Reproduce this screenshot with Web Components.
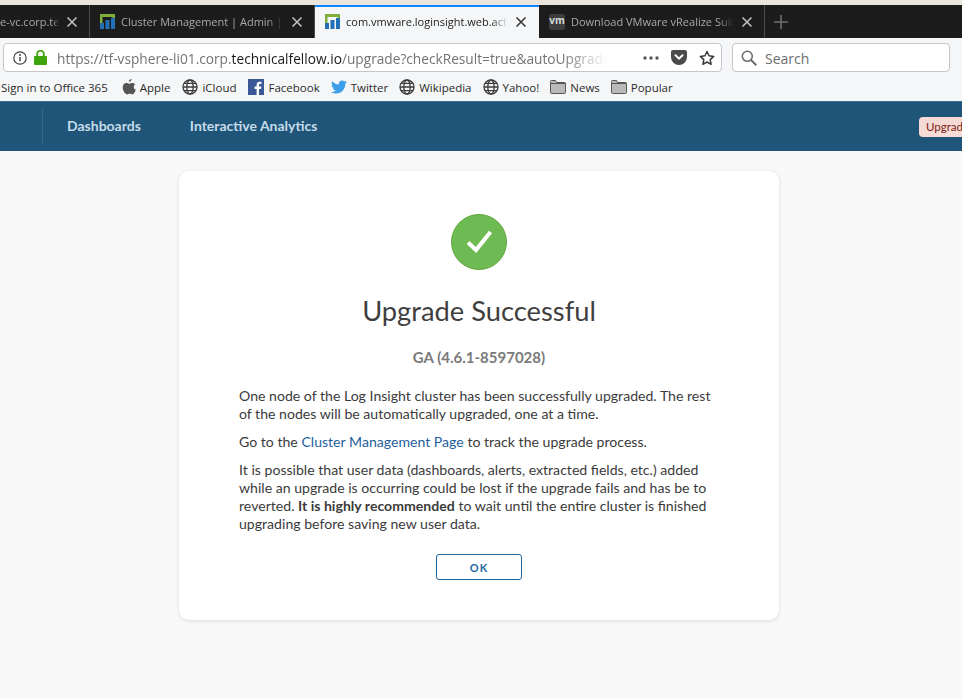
<!DOCTYPE html>
<html>
<head>
<meta charset="utf-8">
<title>Upgrade Successful</title>
<style>
html, body { margin: 0; padding: 0; height: 100%; overflow: hidden; background: #f9f9f9; }
body { display: flex; flex-direction: column; font-family: "Open Sans", "Liberation Sans", sans-serif; }
</style>
</head>
<body>
<tab-strip>
  <browser-tab style="width:90px" clip-left label="e-vc.corp.te"></browser-tab>
  <browser-tab style="width:225px" icon="chart" label="Cluster Management | Admin | v"></browser-tab>
  <browser-tab style="width:224px" icon="chart" active label="com.vmware.loginsight.web.acti"></browser-tab>
  <browser-tab style="width:226px" icon="vm" label="Download VMware vRealize Suit"></browser-tab>
</tab-strip>
<nav-toolbar></nav-toolbar>
<bookmark-bar></bookmark-bar>
<app-header></app-header>
<upgrade-page>
  <upgrade-card heading="Upgrade Successful" version="GA (4.6.1-8597028)">
    <p>One node of the Log Insight cluster has been successfully upgraded. The rest of the nodes will be automatically upgraded, one at a time.</p>
    <p>Go to the <card-link>Cluster Management Page</card-link> to track the upgrade process.</p>
    <p>It is possible that user data (dashboards, alerts, extracted fields, etc.) added while an upgrade is occurring could be lost if the upgrade fails and has be to reverted. <b>It is highly recommended</b> to wait until the entire cluster is finished upgrading before saving new user data.</p>
  </upgrade-card>
</upgrade-page>

<script>
const chartIcon = `<svg width="15" height="15" viewBox="0 0 15 15">
  <path d="M0 15V0h15v15h-2.500V3H2.500v12z" fill="#7fae3a"/>
  <rect x="0" y="9" width="4" height="6" fill="#2270b5"/>
  <rect x="5.500" y="6" width="4" height="9" fill="#2270b5"/>
  <rect x="11" y="4" width="4" height="11" fill="#2270b5"/>
</svg>`
const vmIcon = `<svg width="16" height="16" viewBox="0 0 16 16"><rect width="16" height="16" rx="2.500" fill="#3d3d3d"/></svg>
  <span class="vm">vm</span>`
const globe = `<svg width="16" height="16" viewBox="0 0 16 16" fill="none" stroke="#3c3c3c" stroke-width="1.300">
  <circle cx="8" cy="8" r="7"/><ellipse cx="8" cy="8" rx="3.200" ry="7"/><path d="M1 8h14M2 4.400h12M2 11.600h12"/>
</svg>`
const folder = `<svg width="16" height="14" viewBox="0 0 16 14">
  <path d="M.5 2.500v-1a1 1 0 0 1 1-1h4l1 2h8a1 1 0 0 1 1 1v9a1 1 0 0 1-1 1h-13a1 1 0 0 1-1-1z" fill="#b9b9b9" stroke="#555"/>
  <path d="M.5 3.500h15" stroke="#555"/>
</svg>`
const apple = `<svg width="14" height="16" viewBox="0 0 14 16">
  <path fill="#555" d="M9.600 0c.1 1.200-1.200 2.900-2.700 2.800C6.700 1.500 8.100.1 9.600 0zM13.300 5.300c-1 .7-1.500 1.500-1.500 2.700 0 1.400.8 2.300 2 2.800-.6 1.800-2 4.600-3.500 4.600-.9 0-1.400-.6-2.500-.6s-1.700.6-2.500.6C3.300 15.400.7 11.700.7 8.500c0-2.900 1.900-4.400 3.700-4.400 1.100 0 2 .7 2.700.7s1.700-.8 3-.8c1.200 0 2.400.6 3.200 1.300z"/>
</svg>`
const fb = `<svg width="16" height="16" viewBox="0 0 16 16">
  <rect width="16" height="16" fill="#3b5998"/>
  <path fill="#fff" d="M11 16V10h2l.3-2.400H11V6.100c0-.7.2-1.100 1.200-1.100h1.200V2.800c-.2 0-1-.1-1.800-.1-1.800 0-3 1.100-3 3.100v1.800h-2V10h2v6z"/>
</svg>`
const twitter = `<svg width="16" height="14" viewBox="0 0 17 14">
  <path fill="#3a9fe8" d="M17 1.700c-.6.300-1.300.5-2 .6.700-.4 1.300-1.100 1.500-1.900-.7.400-1.400.7-2.200.8C13.700.5 12.800 0 11.800 0 9.900 0 8.300 1.600 8.300 3.500c0 .3 0 .5.100.8C5.500 4.200 2.900 2.800 1.200.600.900 1.100.700 1.700.700 2.400c0 1.200.6 2.300 1.600 2.900-.6 0-1.100-.2-1.600-.4 0 1.700 1.200 3.100 2.800 3.500-.3.100-.6.100-.9.100-.2 0-.4 0-.7-.1.500 1.400 1.700 2.400 3.300 2.400C3.900 11.800 2.300 12.400.8 12.400H0C1.600 13.400 3.400 14 5.300 14c6.400 0 9.900-5.300 9.900-9.900v-.5c.7-.5 1.300-1.100 1.800-1.900z"/>
</svg>`

class TabStrip extends HTMLElement {
    constructor() {
        super()
        this.attachShadow({ mode: 'open' }).innerHTML = `
            <style>
                :host { display: block; flex: none; background: #ebe5dc; padding-top: 5px; }
                .row { display: flex; height: 33px; background: #1c1c1c; }
                .plus { width: 32px; display: flex; align-items: center; justify-content: center; }
            </style>
            <div class="row">
                <slot></slot>
                <div class="plus">
                    <svg width="14" height="14" viewBox="0 0 14 14"><path d="M7 0v14M0 7h14" stroke="#6e6e6e" stroke-width="1.600"/></svg>
                </div>
            </div>`
    }
}

class BrowserTab extends HTMLElement {
    constructor() {
        super()
        this.attachShadow({ mode: 'open' })
    }
    connectedCallback() {
        const kind = this.getAttribute('icon')
        const icon = kind === 'chart' ? chartIcon : kind === 'vm' ? vmIcon : ''
        this.shadowRoot.innerHTML = `
            <style>
                :host {
                    display: flex; flex: none; box-sizing: border-box; align-items: center;
                    padding: 0 12px 0 10px; gap: 6px; color: #a9a9a9; font-size: 11px;
                    border-right: 1px solid #4a4a4a; position: relative;
                }
                :host([active]) { background: #f5f6f7; color: #222; border-right: 0; padding-right: 13px; }
                :host([active])::before {
                    content: ""; position: absolute; left: 0; right: 0; top: 0; height: 2px; background: #0a84ff;
                }
                .icon { position: relative; height: 15px; flex: none; }
                .vm {
                    position: absolute; inset: 0; text-align: center; color: #d8d8d8; font-weight: 700;
                    font-size: 10px; line-height: 13px; width: 16px;
                }
                .label {
                    flex: 1; min-width: 0; overflow: hidden; white-space: nowrap;
                    -webkit-mask-image: linear-gradient(to right, #000 90%, transparent);
                    mask-image: linear-gradient(to right, #000 90%, transparent);
                }
                :host([clip-left]) { padding-left: 0; }
                svg.x { flex: none; margin-left: 2px; }
            </style>
            ${icon ? `<span class="icon">${icon}</span>` : ''}
            <span class="label">${this.getAttribute('label')}</span>
            <svg class="x" width="10" height="10" viewBox="0 0 10 10"><path d="M.5.500l9 9M9.500.500l-9 9" stroke="${this.hasAttribute('active') ? '#333' : '#c4c4c4'}" stroke-width="1.500"/></svg>`
    }
}

class NavToolbar extends HTMLElement {
    constructor() {
        super()
        this.attachShadow({ mode: 'open' }).innerHTML = `
            <style>
                :host {
                    display: flex; flex: none; box-sizing: border-box; height: 38px; gap: 10px;
                    background: #f5f6f7; padding: 5px 12px 0 3px;
                }
                .box {
                    display: flex; align-items: center; box-sizing: border-box; height: 29px;
                    background: #fff; border: 1px solid #c6c6c8; border-radius: 4px;
                }
                .url { width: 719px; padding: 0 6px 0 9px; }
                .search { flex: 1; padding-left: 8px; gap: 8px; color: #6d6d6d; font-size: 14px; }
                .search span { padding-top: 1px; }
                .addr {
                    flex: 1; min-width: 0; margin-left: 10px; padding-top: 1px; font-size: 13.700px; color: #737373; white-space: nowrap;
                    overflow: hidden;
                    -webkit-mask-image: linear-gradient(to right, #000 92%, transparent);
                    mask-image: linear-gradient(to right, #000 92%, transparent);
                }
                .addr b { font-weight: 400; color: #1a1a1a; }
                .lock { margin-left: 7px; flex: none; }
                .tools { display: flex; align-items: center; gap: 12px; margin-left: 36px; flex: none; }
            </style>
            <div class="box url">
                <svg width="14" height="14" viewBox="0 0 14 14" fill="none"><circle cx="7" cy="7" r="6.200" stroke="#444" stroke-width="1.200"/><path d="M7 6v4.300" stroke="#444" stroke-width="1.500"/><circle cx="7" cy="3.900" r="1" fill="#444"/></svg>
                <svg class="lock" width="13" height="15" viewBox="0 0 13 15" fill="none"><rect x="0" y="6" width="13" height="9" rx="1" fill="#3da40e"/><path d="M3.200 6.500V4a3.300 3.300 0 0 1 6.600 0v2.500" stroke="#3da40e" stroke-width="1.800"/></svg>
                <span class="addr">https://tf-vsphere-li01.corp.<b>technicalfellow.io</b>/upgrade?checkResult=true&amp;autoUpgrade</span>
                <span class="tools">
                    <svg width="16" height="4" viewBox="0 0 16 4" fill="#555"><circle cx="2" cy="2" r="1.700"/><circle cx="8" cy="2" r="1.700"/><circle cx="14" cy="2" r="1.700"/></svg>
                    <svg width="16" height="15" viewBox="0 0 16 15"><path fill="#4b4b4b" d="M2 0h12a2 2 0 0 1 2 2v5a8 8 0 0 1-16 0V2a2 2 0 0 1 2-2z"/><path d="M4.500 5.300L8 8.700l3.500-3.400" fill="none" stroke="#fff" stroke-width="2" stroke-linecap="round"/></svg>
                    <svg width="16" height="16" viewBox="0 0 16 16"><path d="M8 1.500l2 4.300 4.700.6-3.500 3.200.9 4.700L8 12l-4.100 2.300.9-4.700L1.300 6.400 6 5.800z" fill="none" stroke="#3a3a3a" stroke-width="1.500" stroke-linejoin="round"/></svg>
                </span>
            </div>
            <div class="box search">
                <svg width="16" height="16" viewBox="0 0 16 16" fill="none" stroke="#6d6d6d" stroke-width="1.600"><circle cx="6.300" cy="6.300" r="5"/><path d="M10 10l5.300 5.300" stroke-width="2"/></svg>
                <span>Search</span>
            </div>`
    }
}

class BookmarkBar extends HTMLElement {
    constructor() {
        super()
        const items = [
            ['', 'Sign in to Office 365', 14], [apple, 'Apple', 12], [globe, 'iCloud', 12],
            [fb, 'Facebook', 11], [twitter, 'Twitter', 11], [globe, 'Wikipedia', 11],
            [globe, 'Yahoo!', 11], [folder, 'News', 11], [folder, 'Popular', 11]
        ]
        this.attachShadow({ mode: 'open' }).innerHTML = `
            <style>
                :host {
                    display: flex; flex: none; box-sizing: border-box; height: 25px; align-items: center;
                    background: #f5f6f7; padding: 0 0 3px 1px; color: #2a2a2a; font-size: 11.500px; white-space: nowrap;
                }
                span { display: flex; align-items: center; gap: 4px; margin-right: var(--gap); }
                svg { flex: none; }
            </style>
            ${items.map(([icon, text, gap]) => `<span style="--gap:${gap}px">${icon}${text}</span>`).join('')}`
    }
}

class AppHeader extends HTMLElement {
    constructor() {
        super()
        this.attachShadow({ mode: 'open' }).innerHTML = `
            <style>
                :host {
                    display: flex; flex: none; box-sizing: border-box; height: 50px; align-items: center;
                    background: #1e5579; border-top: 1px solid #3f6f8f; padding-left: 42px; overflow: hidden;
                    font-family: Lato, "Liberation Sans", sans-serif;
                }
                .sep { width: 1px; height: 36px; background: #33698c; flex: none; }
                a { color: #c5dbe9; font-size: 14px; font-weight: 700; text-decoration: none; flex: none; padding-bottom: 3px; }
                .first { margin-left: 24px; }
                .second { margin-left: 49px; }
                .badge {
                    margin-left: auto; flex: none; width: 60px; margin-right: -17px; box-sizing: border-box; padding: 0 7px;
                    height: 20px; line-height: 20px; border-radius: 4px; background: #f5dad5; color: #7c2318; font-size: 11.500px;
                    overflow: hidden; white-space: nowrap;
                }
            </style>
            <div class="sep"></div>
            <a class="first" href="#">Dashboards</a>
            <a class="second" href="#">Interactive Analytics</a>
            <div class="badge">Upgrade</div>`
    }
}

class UpgradePage extends HTMLElement {
    constructor() {
        super()
        this.attachShadow({ mode: 'open' }).innerHTML = `
            <style>
                :host {
                    display: flex; flex: 1; justify-content: center; align-items: flex-start;
                    background: #f9f9f9; padding: 20px 4px 0 0;
                    font-family: Lato, "Liberation Sans", sans-serif;
                }
            </style>
            <slot></slot>`
    }
}

class UpgradeCard extends HTMLElement {
    constructor() {
        super()
        this.attachShadow({ mode: 'open' })
    }
    connectedCallback() {
        this.shadowRoot.innerHTML = `
            <style>
                :host {
                    display: flex; flex-direction: column; align-items: center; box-sizing: border-box;
                    width: 600px; height: 449px; padding: 43px 60px 0; background: #fff; border-radius: 10px;
                    box-shadow: 0 1px 4px rgba(0,0,0,.12); color: #3b3b3b;
                }
                h1 { margin: 25px 0 0; font-size: 27.300px; line-height: 32px; font-weight: 400; color: #3f3f3f; }
                h2 { margin: 20px 0 0; font-size: 15px; line-height: 20px; font-weight: 700; color: #7a7a7a; }
                .copy { align-self: stretch; margin-top: 20px; font-size: 14.100px; line-height: 18px; }
                ::slotted(p) { margin: 0 0 10px; }
                button {
                    display: block; margin-top: 11px; width: 86px; height: 26px; background: #fff;
                    border: 1px solid #1f659f; border-radius: 3px; color: #1f659f; font: 700 11px Lato, "Liberation Sans", sans-serif;
                    letter-spacing: 1px; padding: 0;
                }
            </style>
            <svg width="56" height="56" viewBox="0 0 56 56">
                <circle cx="28" cy="28" r="27.500" fill="#6dbb52" stroke="#5fa83f"/>
                <path d="M17 28.500l8 7.500 14.500-18" fill="none" stroke="#fff" stroke-width="4"/>
            </svg>
            <h1>${this.getAttribute('heading')}</h1>
            <h2>${this.getAttribute('version')}</h2>
            <div class="copy"><slot></slot></div>
            <button>OK</button>`
    }
}

class CardLink extends HTMLElement {
    constructor() {
        super()
        this.attachShadow({ mode: 'open' }).innerHTML = `
            <style>
                :host { display: inline; }
                a { color: #1f5f9e; text-decoration: none; }
            </style>
            <a href="#"><slot></slot></a>`
    }
}

customElements.define('tab-strip', TabStrip)
customElements.define('browser-tab', BrowserTab)
customElements.define('nav-toolbar', NavToolbar)
customElements.define('bookmark-bar', BookmarkBar)
customElements.define('app-header', AppHeader)
customElements.define('upgrade-page', UpgradePage)
customElements.define('upgrade-card', UpgradeCard)
customElements.define('card-link', CardLink)
</script>
</body>
</html>
